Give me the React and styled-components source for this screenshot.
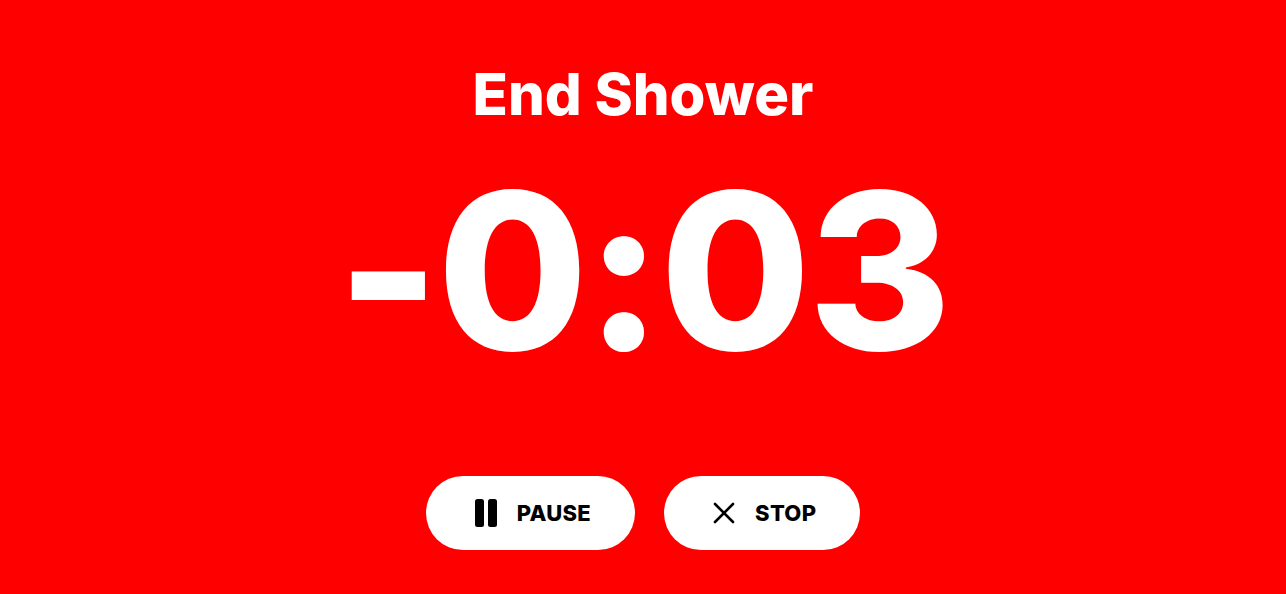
import React from 'react';
import styled, { createGlobalStyle } from 'styled-components';

const GlobalStyle = createGlobalStyle`
  html, body {
    margin: 0;
    padding: 0;
    background: #ff0000;
  }
  body {
    font-family: Inter, "Noto Sans", sans-serif;
  }
`;

export default function App() {
  return (
    <>
      <GlobalStyle />
      <Screen>
        <Title>End Shower</Title>
        <Countdown>-0:03</Countdown>
        <Controls>
          <ControlButton type='button'>
            <svg width='24' height='28' viewBox='0 0 24 28'>
              <rect x='1' y='0' width='9' height='28' rx='2.5' fill='#000' />
              <rect x='14' y='0' width='9' height='28' rx='2.5' fill='#000' />
            </svg>
            PAUSE
          </ControlButton>
          <ControlButton type='button'>
            <svg width='24' height='24' viewBox='0 0 24 24'>
              <path
                d='M3 3 L21 21 M21 3 L3 21'
                stroke='#000'
                strokeWidth='2.6'
                strokeLinecap='round'
              />
            </svg>
            STOP
          </ControlButton>
        </Controls>
      </Screen>
    </>
  );
}

const Screen = styled.main`
  width: 100%;
  height: 594px;
  padding-top: 65px;
  box-sizing: border-box;
  display: flex;
  flex-direction: column;
  align-items: center;
  background: #ff0000;
  color: #fff;
`;

const Title = styled.h1`
  margin: 0;
  font-size: 58px;
  line-height: 1;
  font-weight: 800;
`;

const Countdown = styled.div`
  margin-top: 39px;
  font-size: 218px;
  line-height: 1;
  font-weight: 800;
  letter-spacing: -2.5px;
`;

const Controls = styled.div`
  margin-top: 96px;
  display: flex;
  gap: 29px;
`;

const ControlButton = styled.button`
  height: 74px;
  padding: 0 44px 0 48px;
  display: flex;
  align-items: center;
  gap: 19px;
  border: none;
  border-radius: 37px;
  background: #fff;
  color: #000;
  font-family: Inter, "Noto Sans", sans-serif;
  font-size: 22px;
  font-weight: 800;
  letter-spacing: 0.3px;
  cursor: pointer;
`;
